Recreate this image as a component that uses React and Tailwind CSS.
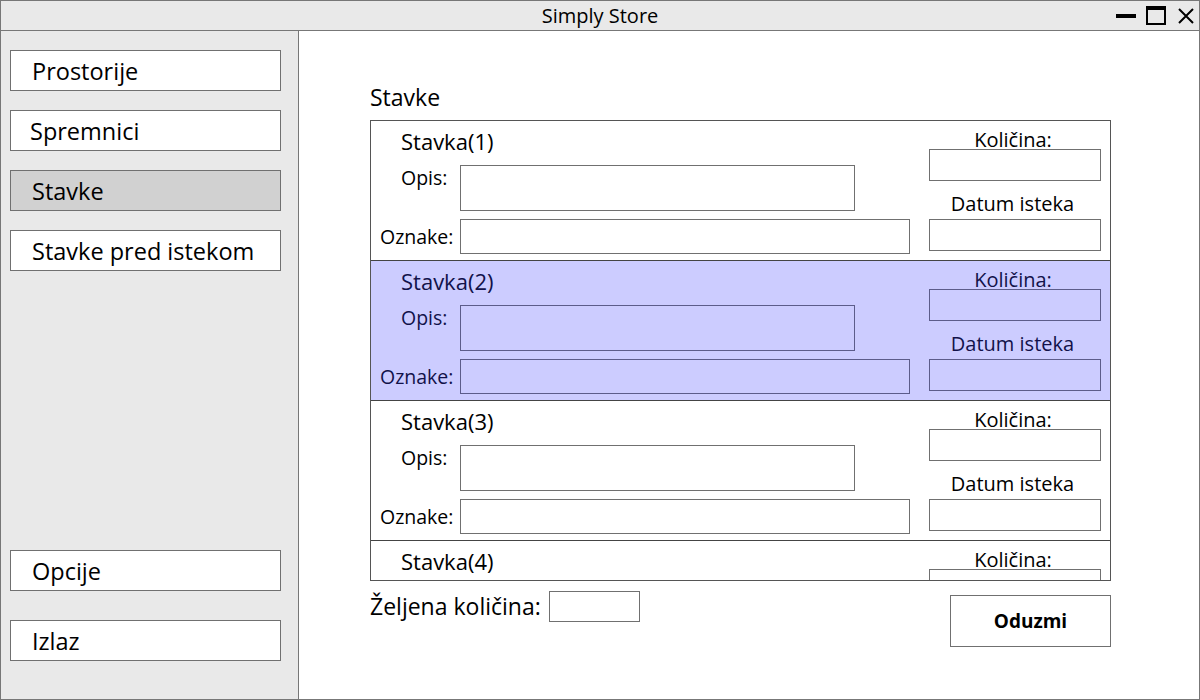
import React from 'react'

// Simply Store — "Stavke" screen mockup

const NAV_TOP = [
  { label: 'Prostorije', pad: 'pl-[21px]' },
  { label: 'Spremnici', pad: 'pl-[19px]' },
  { label: 'Stavke', pad: 'pl-[21px]', active: true },
  { label: 'Stavke pred istekom', pad: 'pl-[21px]' },
]

const ITEMS = [1, 2, 3, 4]
const SELECTED = 2

function NavButton({ label, pad, active, className = '' }) {
  return (
    <div
      className={`w-[271px] h-[41px] shrink-0 flex items-center border border-[#707070] text-[23.5px] leading-[32px] text-black ${pad} ${
        active ? 'bg-[#d1d1d1]' : 'bg-white'
      } ${className}`}
    >
      {label}
    </div>
  )
}

function ItemRow({ n, selected }) {
  const text = selected ? 'text-[#12124a]' : 'text-black'
  const box = selected ? 'border-[#5c5c8a]' : 'border-[#707070]'

  return (
    <div
      className={`flex h-[140px] shrink-0 border-b border-[#444] ${text} ${
        selected ? 'bg-[#ccccff]' : 'bg-white'
      }`}
    >
      {/* left side: title, opis, oznake */}
      <div className="flex-1 pl-[9px]">
        <div className="h-[40px] flex items-center pl-[21px] text-[22px]">Stavka({n})</div>
        <div className="flex mt-[4px]">
          <div className="w-[80px] pl-[21px] text-[19.5px] leading-[26px]">Opis:</div>
          <div className={`w-[395px] h-[46px] border ${box}`} />
        </div>
        <div className="flex items-center mt-[8px]">
          <div className="w-[80px] text-[19.5px] leading-[26px]">Oznake:</div>
          <div className={`w-[450px] h-[35px] border ${box}`} />
        </div>
      </div>

      {/* right side: količina, datum */}
      <div className="w-[172px] mr-[9px] flex flex-col">
        <div className="pt-[9px] pr-[4px] text-[20px] leading-[19px] text-center">Količina:</div>
        <div className={`h-[32px] border ${box}`} />
        <div className="mt-[13px] pr-[5px] text-[20px] leading-[20px] text-center">Datum isteka</div>
        <div className={`mt-[5px] h-[32px] border ${box}`} />
      </div>
    </div>
  )
}

export default function App() {
  return (
    <div className="w-[1200px] h-[700px] flex flex-col border border-[#777] bg-white font-['Open_Sans',sans-serif] text-black overflow-hidden">
      {/* title bar */}
      <div className="relative h-[30px] shrink-0 flex items-center justify-center border-b border-[#777] bg-[#e9e9e9]">
        <span className="text-[20px] leading-[28px]">Simply Store</span>
        <div className="absolute right-[5px] top-0 h-full flex items-center">
          <div className="w-[20px] h-[4px] bg-black" />
          <div className="ml-[10px] w-[20px] h-[19px] border-2 border-t-4 border-black" />
          <svg className="ml-[12px]" width="16" height="16" viewBox="0 0 16 16" fill="none" stroke="black" strokeWidth="2">
            <path d="M1 1L15 15M15 1L1 15" />
          </svg>
        </div>
      </div>

      <div className="flex flex-1 min-h-0">
        {/* sidebar */}
        <div className="w-[298px] shrink-0 flex flex-col border-r border-[#777] bg-[#e9e9e9] pl-[9px] pt-[19px] pb-[38px]">
          <div className="flex flex-col gap-[19px]">
            {NAV_TOP.map(n => (
              <NavButton key={n.label} {...n} />
            ))}
          </div>
          <NavButton label="Opcije" pad="pl-[21px]" className="mt-auto" />
          <NavButton label="Izlaz" pad="pl-[21px]" className="mt-[29px]" />
        </div>

        {/* content */}
        <div className="flex-1 pl-[71px] pt-[51px]">
          <div className="text-[23px] leading-[30px]">Stavke</div>

          <div className="mt-[8px] w-[741px] h-[461px] flex flex-col border border-[#555] overflow-hidden">
            {ITEMS.map(n => (
              <ItemRow key={n} n={n} selected={n === SELECTED} />
            ))}
          </div>

          <div className="mt-[9px] w-[741px] flex items-start justify-between">
            <div className="flex items-center h-[32px]">
              <span className="text-[23px] leading-[32px]">Željena količina:</span>
              <div className="ml-[8px] w-[91px] h-[31px] border border-[#707070] bg-white" />
            </div>
            <div className="mt-[5px] w-[161px] h-[52px] flex items-center justify-center border border-[#707070] bg-white text-[19px] leading-[28px] font-bold">
              Oduzmi
            </div>
          </div>
        </div>
      </div>
    </div>
  )
}
